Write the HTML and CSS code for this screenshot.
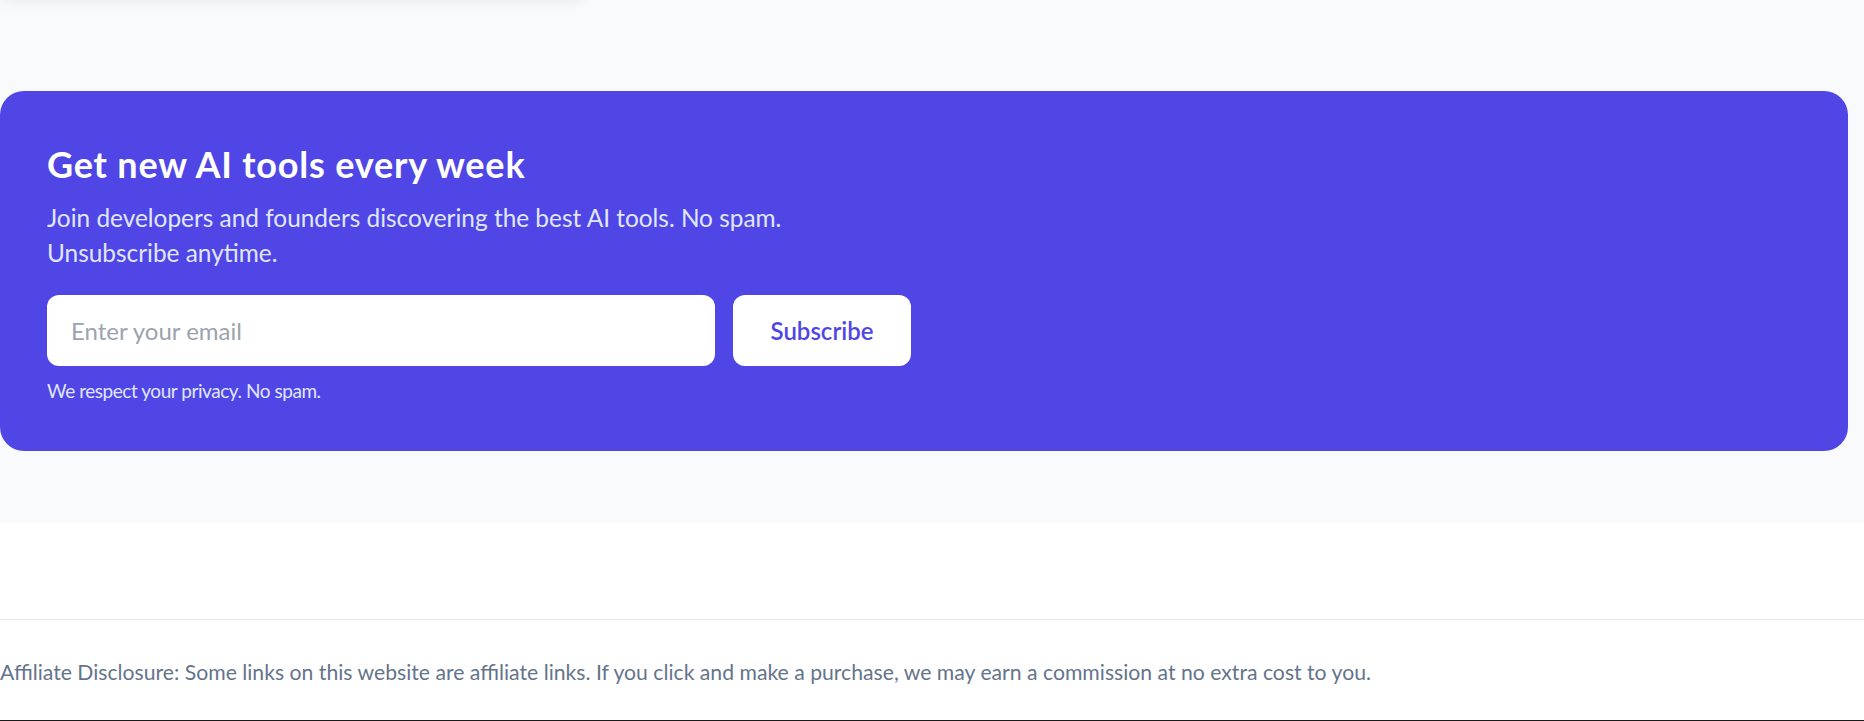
FILE: index.html
```html
<!DOCTYPE html>
<html lang="en">
  <head>
    <meta charset="UTF-8" />
    <meta name="viewport" content="width=device-width, initial-scale=1.0" />
    <title>AI Tools Newsletter</title>
    <link rel="stylesheet" href="styles.css">
  </head>
  <body>
    <section class="newsletter">
      <div class="prev-card"></div>
      <div class="signup">
        <h2>Get new AI tools every week</h2>
        <p class="lead">Join developers and founders discovering the best AI tools. No spam. Unsubscribe anytime.</p>
        <form class="signup-form" onsubmit="return false;">
          <input type="email" placeholder="Enter your email" />
          <button type="submit">Subscribe</button>
        </form>
        <p class="note">We respect your privacy. No spam.</p>
      </div>
    </section>

    <div class="spacer"></div>

    <footer class="disclosure">
      <p>Affiliate Disclosure: Some links on this website are affiliate links. If you click and make a purchase, we may earn a commission at no extra cost to you.</p>
    </footer>
    <div class="site-footer"></div>
  </body>
</html>
```

FILE: styles.css
```css
body {
  margin: 0;
  padding: 0;
  font-family: Lato, "Open Sans", sans-serif;
  background-color: #ffffff;
}
.newsletter {
  display: flow-root;
  background-color: #f9fafb;
  padding: 0 16px 72px 0;
}
.prev-card {
  width: 583px;
  height: 20px;
  margin-top: -20px;
  background-color: #ffffff;
  box-shadow: 0 2px 12px rgba(15, 23, 42, 0.06);
}
.signup {
  margin-top: 91px;
  padding: 52px 47px 46px;
  background-color: #4f46e5;
  border-radius: 24px;
  color: #ffffff;
}
.signup h2 {
  margin: 0;
  font-size: 36px;
  line-height: 42px;
  font-weight: 700;
  letter-spacing: 0.8px;
}
.lead {
  margin: 15px 0 0;
  max-width: 840px;
  font-size: 24.4px;
  line-height: 35px;
  color: #e0e7ff;
}
.signup-form {
  display: flex;
  gap: 18px;
  margin-top: 25px;
}
.signup-form input {
  box-sizing: border-box;
  width: 668px;
  height: 71px;
  padding: 0 24px;
  border: none;
  border-radius: 12px;
  font-family: inherit;
  font-size: 24px;
  color: #111827;
  outline: none;
}
.signup-form input::placeholder {
  color: #9ca3af;
}
.signup-form button {
  width: 178px;
  height: 71px;
  border: none;
  border-radius: 12px;
  background-color: #ffffff;
  color: #4f46e5;
  font-family: inherit;
  font-size: 24px;
  font-weight: 600;
  cursor: pointer;
}
.note {
  margin: 11px 0 0;
  font-size: 19px;
  line-height: 28px;
  letter-spacing: -0.45px;
  color: #e0e7ff;
}
.spacer {
  height: 96px;
}
.disclosure {
  border-top: 1px solid #e5e7eb;
  padding: 38px 0 34px;
}
.disclosure p {
  margin: 0;
  font-size: 21.2px;
  line-height: 28px;
  color: #64748b;
}
.site-footer {
  height: 1px;
  background-color: #1a1a1a;
}
```
